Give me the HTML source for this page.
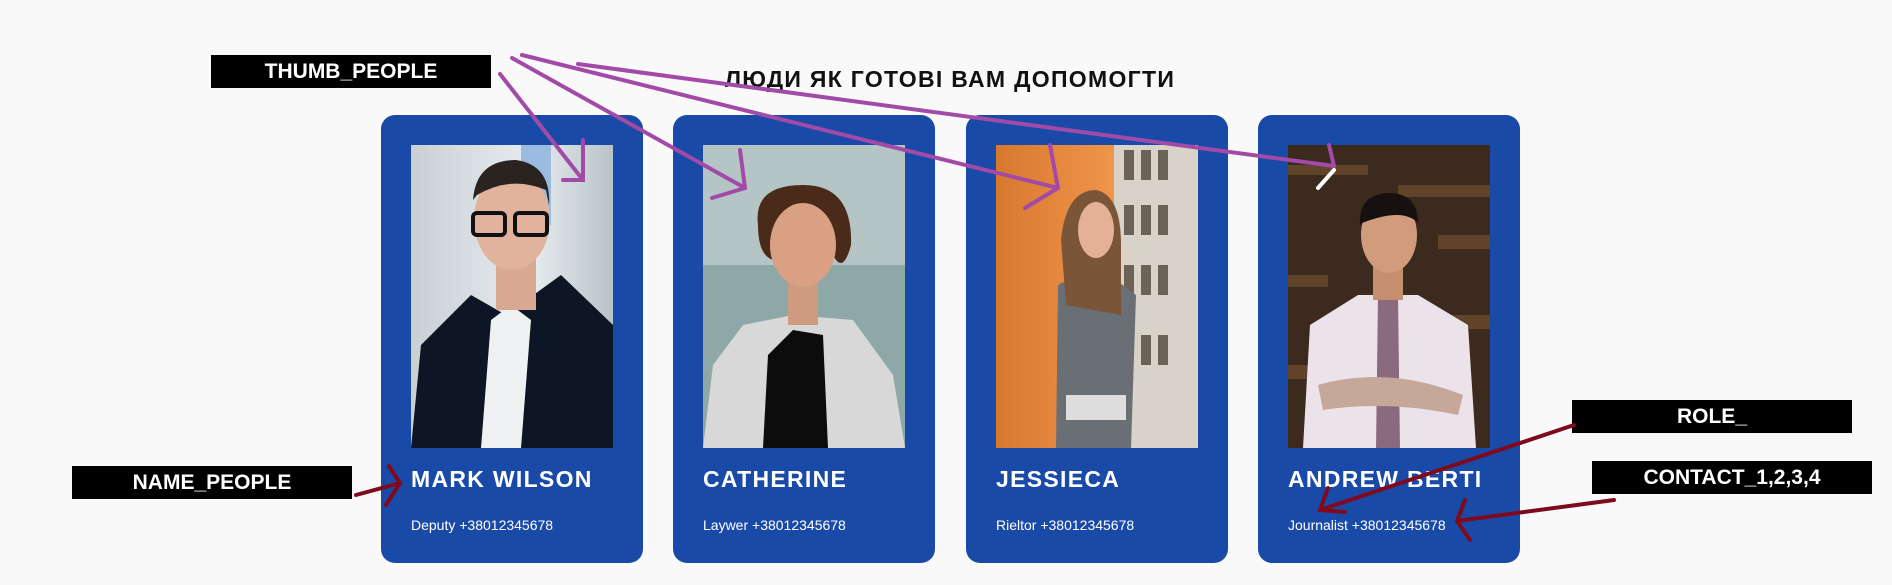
<!DOCTYPE html>
<html><head><meta charset="utf-8"><style>
html,body{margin:0;padding:0;}
body{width:1892px;height:585px;background:#f9f9f9;position:relative;overflow:hidden;font-family:"Liberation Sans",Arial,sans-serif;}
.card{position:absolute;top:115px;width:262px;height:448px;background:#1a4aa7;border-radius:14px;}
.ph{position:absolute;left:30px;top:30px;width:202px;height:303px;overflow:hidden;}
.nm{position:absolute;left:30px;top:351px;color:#fff;font-weight:bold;font-size:23px;letter-spacing:1.3px;white-space:nowrap;}
.ct{position:absolute;left:30px;top:402px;color:#fff;font-size:14px;white-space:nowrap;}
.title{position:absolute;left:0;width:1900px;text-align:center;top:66px;font-weight:bold;font-size:23px;color:#111;letter-spacing:1.3px;}
.lbl{position:absolute;background:#000;color:#fff;font-weight:bold;font-size:21px;text-align:center;line-height:33px;height:33px;width:280px;font-family:"Liberation Sans",sans-serif;}
svg.ov{position:absolute;left:0;top:0;}
</style></head><body>
<div class="title">ЛЮДИ ЯК ГОТОВІ ВАМ ДОПОМОГТИ</div>

<div class="card" style="left:381px"><div class="ph">
<svg width="202" height="303"><defs><linearGradient id="g1" x1="0" x2="1"><stop offset="0" stop-color="#c9d0d3"/><stop offset=".6" stop-color="#e6ecef"/><stop offset="1" stop-color="#b9c3c7"/></linearGradient></defs>
<rect width="202" height="303" fill="url(#g1)"/><rect x="110" y="0" width="30" height="80" fill="#9bbbe0"/>
<path d="M0 303 L10 200 L60 150 L95 170 L150 130 L202 180 L202 303Z" fill="#0d1624"/>
<path d="M70 303 L80 175 L100 160 L120 175 L110 303Z" fill="#eef0f2"/>
<rect x="85" y="105" width="40" height="60" fill="#d8a892"/>
<ellipse cx="101" cy="75" rx="38" ry="50" fill="#e2b39c"/>
<path d="M62 55 Q65 15 105 15 Q140 20 138 60 L135 45 Q100 30 66 50Z" fill="#2a2420"/>
<rect x="62" y="68" width="32" height="22" rx="4" fill="none" stroke="#111" stroke-width="4"/><rect x="104" y="68" width="32" height="22" rx="4" fill="none" stroke="#111" stroke-width="4"/>
</svg></div><div class="nm">MARK WILSON</div><div class="ct">Deputy +38012345678</div></div>

<div class="card" style="left:673px"><div class="ph">
<svg width="202" height="303"><rect width="202" height="303" fill="#8ea8a8"/><rect x="0" y="0" width="202" height="120" fill="#b5c5c5"/>
<path d="M0 303 L10 220 L40 180 L90 170 L150 175 L190 230 L202 303Z" fill="#d8d8d8"/>
<path d="M60 303 L65 210 L90 185 L120 190 L125 303Z" fill="#0c0c0c"/>
<rect x="85" y="130" width="30" height="50" fill="#cf9b80"/>
<path d="M55 80 Q50 40 100 40 Q150 40 148 100 Q140 130 130 110 L70 115 Q55 110 55 80Z" fill="#4a2a18"/>
<ellipse cx="100" cy="100" rx="33" ry="42" fill="#d9a084"/>
</svg></div><div class="nm">CATHERINE</div><div class="ct">Laywer +38012345678</div></div>

<div class="card" style="left:966px"><div class="ph">
<svg width="202" height="303"><defs><linearGradient id="g3" x1="0" x2="1"><stop offset="0" stop-color="#d8782f"/><stop offset="1" stop-color="#ffab5e"/></linearGradient></defs>
<rect width="202" height="303" fill="url(#g3)"/><rect x="118" y="0" width="84" height="303" fill="#d8d2c8"/>
<g fill="#6b6356"><rect x="128" y="5" width="10" height="30"/><rect x="145" y="5" width="10" height="30"/><rect x="162" y="5" width="10" height="30"/><rect x="128" y="60" width="10" height="30"/><rect x="145" y="60" width="10" height="30"/><rect x="162" y="60" width="10" height="30"/><rect x="128" y="120" width="10" height="30"/><rect x="145" y="120" width="10" height="30"/><rect x="162" y="120" width="10" height="30"/><rect x="145" y="190" width="10" height="30"/><rect x="162" y="190" width="10" height="30"/></g>
<path d="M60 303 L62 140 L100 120 L140 150 L135 303Z" fill="#6a6e75"/>
<path d="M65 95 Q70 45 100 45 Q125 50 125 100 L125 170 L70 160Z" fill="#7a5538"/>
<ellipse cx="100" cy="85" rx="18" ry="28" fill="#e4b196"/>
<rect x="70" y="250" width="60" height="25" fill="#ddd"/>
</svg></div><div class="nm">JESSIECA</div><div class="ct">Rieltor +38012345678</div></div>

<div class="card" style="left:1258px"><div class="ph">
<svg width="202" height="303"><rect width="202" height="303" fill="#3b2a1d"/>
<g fill="#6b4a2c" opacity=".8"><rect x="0" y="20" width="80" height="10"/><rect x="110" y="40" width="92" height="12"/><rect x="150" y="90" width="52" height="14"/><rect x="0" y="130" width="40" height="12"/><rect x="160" y="170" width="42" height="14"/><rect x="0" y="220" width="30" height="14"/></g>
<path d="M15 303 L22 180 L70 150 L130 150 L180 180 L188 303Z" fill="#ece2ea"/>
<path d="M90 150 L110 150 L112 303 L88 303Z" fill="#8a6b7e"/>
<path d="M30 240 Q100 220 175 250 L170 270 Q100 255 35 265Z" fill="#c6a89a"/>
<rect x="85" y="110" width="30" height="45" fill="#c58e6e"/>
<ellipse cx="101" cy="90" rx="28" ry="38" fill="#d19c7c"/>
<path d="M72 80 Q70 50 100 48 Q130 48 130 78 Q115 62 74 78Z" fill="#161010"/>
</svg></div><div class="nm">ANDREW BERTI</div><div class="ct">Journalist +38012345678</div></div>

<div class="lbl" style="left:211px;top:55px">THUMB_PEOPLE</div>
<div class="lbl" style="left:72px;top:466px">NAME_PEOPLE</div>
<div class="lbl" style="left:1572px;top:400px">ROLE_</div>
<div class="lbl" style="left:1592px;top:461px">CONTACT_1,2,3,4</div>

<svg class="ov" width="1892" height="585" fill="none" stroke-linecap="round">
<g stroke="#a24aa8" stroke-width="4">
<path d="M500 74 L583 180 M583 140 L583 180 L563 180"/>
<path d="M512 58 L745 188 M740 150 L745 188 L712 198"/>
<path d="M522 55 L1058 188 M1050 145 L1058 188 L1025 208"/>
<path d="M578 64 L1334 166 M1329 145 L1334 166"/>
</g>
<path d="M1334 170 L1318 188" stroke="#fff" stroke-width="4"/>
<g stroke="#7f0a1e" stroke-width="4">
<path d="M356 495 L400 483 M389 466 L400 483 L386 505"/>
<path d="M1574 425 L1320 510 M1328 488 L1320 510 L1345 512"/>
<path d="M1614 500 L1457 521 M1465 500 L1457 521 L1470 540"/>
</g>
</svg>
</body></html>
